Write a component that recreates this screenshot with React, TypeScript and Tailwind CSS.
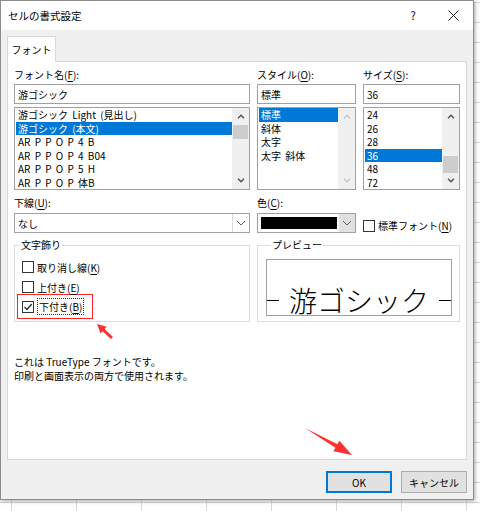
import React from "react";

function Caret({ up, light }: { up?: boolean; light?: boolean }) {
  return (
    <svg width="8" height="5" viewBox="0 0 8 5">
      <path
        d={up ? "M1 4.2 L4 1.2 L7 4.2" : "M1 0.8 L4 3.8 L7 0.8"}
        fill="none"
        stroke={light ? "#c4c4c4" : "#505050"}
        strokeWidth="1.4"
      />
    </svg>
  );
}

function DropArrow() {
  return (
    <svg width="10" height="6" viewBox="0 0 10 6">
      <path d="M1 1 L5 5 L9 1" fill="none" stroke="#606060" strokeWidth="1" />
    </svg>
  );
}

function ScrollBar({ thumb, light }: { thumb?: string; light?: boolean }) {
  return (
    <div className="w-[17px] h-full bg-[#f0f0f0] flex flex-col">
      <div className="h-[17px] flex items-center justify-center">
        <Caret up light={light} />
      </div>
      <div className="flex-1">{thumb && <div className={thumb} />}</div>
      <div className="h-[17px] flex items-center justify-center">
        <Caret light={light} />
      </div>
    </div>
  );
}

function ListBox({
  items,
  selected,
  thumb,
  light,
}: {
  items: string[];
  selected: number;
  thumb?: string;
  light?: boolean;
}) {
  return (
    <div className="mt-[3px] h-[83px] border border-[#a0a0a0] bg-white flex">
      <div className="flex-1 pl-[1px] overflow-hidden [word-spacing:2px]">
        {items.map((it, i) => (
          <div
            key={i}
            className={
              i === selected
                ? "h-[13.5px] flex items-center pl-[2px] bg-[#0078d7] text-white whitespace-nowrap"
                : "h-[13.5px] flex items-center pl-[2px] whitespace-nowrap"
            }
          >
            {it}
          </div>
        ))}
      </div>
      <ScrollBar thumb={thumb} light={light} />
    </div>
  );
}

function Label({ text, k, rest }: { text: string; k: string; rest?: string }) {
  return (
    <div className="h-[14px] leading-[14px] whitespace-nowrap">
      {text}(<span className="underline underline-offset-2">{k}</span>){rest ?? ":"}
    </div>
  );
}

function Box({ checked }: { checked?: boolean }) {
  return (
    <div className="w-[12px] h-[12px] border border-[#333333] bg-white flex items-center justify-center shrink-0">
      {checked && (
        <svg width="10" height="10" viewBox="0 0 10 10">
          <path d="M1.5 5 L4 7.5 L8.8 2" fill="none" stroke="#222" strokeWidth="1.2" />
        </svg>
      )}
    </div>
  );
}

export default function App() {
  return (
    <div className="relative w-[480px] h-[511px] overflow-hidden bg-white bg-[image:linear-gradient(to_right,#d6d6d6_1px,transparent_1px),linear-gradient(to_bottom,#d6d6d6_1px,transparent_1px)] bg-[size:65px_20px] bg-[position:11px_2px] font-['Noto_Sans_CJK_JP','Noto_Sans',sans-serif] text-[10px] text-black">
      <div className="w-[474px] h-[500px] border border-[#8c8c8c] bg-[#f0f0f0] flex flex-col shadow-[1px_1px_4px_rgba(0,0,0,0.35)]">
        {/* title bar */}
        <div className="h-[29px] bg-white flex items-center shrink-0">
          <div className="pl-[7px] flex-1 text-[10.5px]">セルの書式設定</div>
          <div className="w-[40px] flex justify-center text-[11px]">?</div>
          <div className="w-[40px] flex justify-center">
            <svg width="11" height="11" viewBox="0 0 11 11">
              <path d="M0.5 0.5 L10.5 10.5 M10.5 0.5 L0.5 10.5" stroke="#222" strokeWidth="1" />
            </svg>
          </div>
        </div>

        <div className="px-[6px] pt-[6px] flex flex-col">
          {/* tab */}
          <div className="relative z-10 -mb-[1px] w-[49px] h-[26px] bg-white border border-b-0 border-[#d9d9d9] flex items-center justify-center">
            フォント
          </div>

          {/* panel */}
          <div className="h-[399px] border border-[#d9d9d9] bg-white px-[6px] pt-[6px] flex flex-col">
            <div className="flex gap-x-[7px]">
              <div className="w-[236px]">
                <Label text="フォント名" k="F" />
                <div className="mt-[2px] h-[20px] border border-[#a0a0a0] flex items-center pl-[3px]">游ゴシック</div>
                <ListBox
                  items={["游ゴシック Light (見出し)", "游ゴシック (本文)", "AR P P O P 4 B", "AR P P O P 4 B04", "AR P P O P 5 H", "AR P P O P 体B"]}
                  selected={1}
                  thumb="mt-[0px] h-[14px] mx-[1px] bg-[#cdcdcd]"
                />
              </div>
              <div className="w-[99px]">
                <Label text="スタイル" k="O" />
                <div className="mt-[2px] h-[20px] border border-[#a0a0a0] flex items-center pl-[3px]">標準</div>
                <ListBox items={["標準", "斜体", "太字", "太字 斜体"]} selected={0} light />
              </div>
              <div className="w-[97px]">
                <Label text="サイズ" k="S" />
                <div className="mt-[2px] h-[20px] border border-[#a0a0a0] flex items-center pl-[3px]">36</div>
                <ListBox
                  items={["24", "26", "28", "36", "48", "72"]}
                  selected={3}
                  thumb="mt-[31px] h-[17px] mx-[1px] bg-[#cdcdcd]"
                />
              </div>
            </div>

            {/* underline / colour */}
            <div className="mt-[6px] flex gap-x-[7px]">
              <div className="w-[236px]">
                <Label text="下線" k="U" />
                <div className="mt-[3px] h-[20px] border border-[#a0a0a0] bg-white flex">
                  <div className="flex-1 flex items-center pl-[3px]">なし</div>
                  <div className="w-[17px] border-l border-[#dcdcdc] flex items-center justify-center">
                    <DropArrow />
                  </div>
                </div>
              </div>
              <div className="w-[99px]">
                <Label text="色" k="C" />
                <div className="mt-[3px] h-[20px] border border-[#a0a0a0] bg-white flex">
                  <div className="flex-1 p-[3px] pr-[2px]">
                    <div className="h-full bg-black" />
                  </div>
                  <div className="w-[16px] bg-[#e1e1e1] flex items-center justify-center">
                    <DropArrow />
                  </div>
                </div>
              </div>
              <div className="w-[97px] pt-[22px] flex items-center gap-[3px] whitespace-nowrap">
                <Box />
                <span>
                  標準フォント(<span className="underline underline-offset-2">N</span>)
                </span>
              </div>
            </div>

            {/* groups */}
            <div className="mt-[5px] flex gap-x-[7px]">
              <fieldset className="w-[236px] h-[84px] border border-[#dcdcdc] pt-[8px] pb-[2px]">
                <legend className="ml-[5px] px-[1px] leading-[14px]">文字飾り</legend>
                <div className="h-[14px] pl-[7px] flex items-center gap-[3px]">
                  <Box />
                  <span>
                    取り消し線(<span className="underline underline-offset-2">K</span>)
                  </span>
                </div>
                <div className="mt-[6px] h-[14px] pl-[7px] flex items-center gap-[3px]">
                  <Box />
                  <span>
                    上付き(<span className="underline underline-offset-2">E</span>)
                  </span>
                </div>
                <div className="ml-[2px] w-[76px] h-[25px] border border-[#ff2020] pl-[4px] flex items-center gap-[3px]">
                  <Box checked />
                  <span className="border border-dotted border-[#333] px-[1px] leading-[15px]">
                    下付き(<span className="underline underline-offset-2">B</span>)
                  </span>
                </div>
              </fieldset>
              <fieldset className="w-[203px] h-[84px] border border-[#dcdcdc] pl-[8px] pr-[7px] pt-[7px]">
                <legend className="ml-[5px] px-[1px] leading-[14px]">プレビュー</legend>
                <div className="h-[57px] border border-[#a0a0a0] flex flex-col justify-end pb-[1px]">
                  <div className="h-[28px] flex items-center justify-between">
                    <div className="w-[12px] h-[1px] bg-black" />
                    <div className="text-[28px] leading-[28px] font-light">游ゴシック</div>
                    <div className="w-[12px] h-[1px] bg-black" />
                  </div>
                </div>
              </fieldset>
            </div>

            <div className="mt-[33px] leading-[14px]">
              <div>これは TrueType フォントです。</div>
              <div>印刷と画面表示の両方で使用されます。</div>
            </div>
          </div>

          {/* buttons */}
          <div className="mt-[11px] flex justify-end gap-[9px]">
            <div className="w-[66px] h-[22px] bg-[#e1e1e1] border-2 border-[#0078d7] flex items-center justify-center">OK</div>
            <div className="w-[66px] h-[22px] bg-[#e1e1e1] border border-[#adadad] flex items-center justify-center">キャンセル</div>
          </div>
        </div>
      </div>

      {/* red annotation arrows */}
      <svg className="absolute inset-0 pointer-events-none" width="480" height="511" viewBox="0 0 480 511">
        <polygon points="97,324 106.7,326.8 104.6,329 113,337 111,339.1 102.6,331.2 100.5,333.4" fill="#ff3030" />
        <polygon points="305,428 337.4,444.3 339.4,440.8 352,455 333.4,451.2 335.4,447.7" fill="#ff3030" />
      </svg>
    </div>
  );
}
